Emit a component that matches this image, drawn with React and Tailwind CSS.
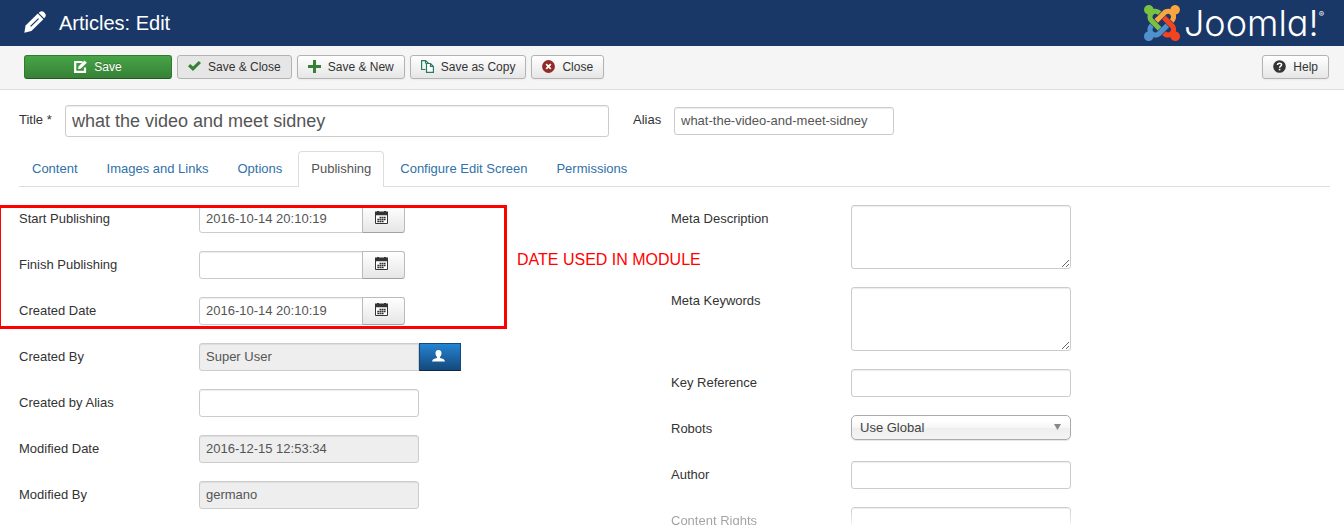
import React from "react";

const btnBase =
  "flex h-6 items-center justify-center gap-[7px] rounded-[3px] border px-[10px] text-[12px] leading-[18px] [&>svg]:mb-[2px]";
const btn = `${btnBase} border-[#b3b3b3] bg-linear-to-b from-white to-[#e6e6e6] text-[#333] shadow-[0_1px_2px_rgba(0,0,0,0.05)]`;
const field =
  "h-7 border border-[#ccc] px-[6px] pb-[2px] text-[13px] leading-[18px] text-[#555] shadow-[inset_0_1px_1px_rgba(0,0,0,0.075)]";
const area =
  "h-16 w-[220px] rounded-[3px] border border-[#ccc] shadow-[inset_0_1px_1px_rgba(0,0,0,0.075)]";
const labelText = "w-[180px] shrink-0 pt-[5px] text-[13px] leading-[18px] text-[#333]";

function Pencil() {
  return (
    <svg viewBox="0 0 22 22" className="size-[22px] shrink-0" fill="#fff" aria-hidden="true">
      <path d="M0.3 21.7 1.6 14.4 13.8 2.6 19.4 8.2 7.4 20Z" />
      <path d="M14.7 1.9 16 .8C17.3-.1 18.8.1 19.8 1.1L20.9 2.2C21.9 3.2 22.1 4.7 21.2 6L20.1 7.3Z" />
      <path d="M6.600 15.400 14.600 7.600" stroke="#1a3867" strokeWidth="1.3" />
      <path d="M14.2 2.2 19.8 7.8" stroke="#1a3867" strokeWidth="0.6" />
    </svg>
  );
}
function EditIcon() {
  return (
    <svg viewBox="0 0 13 13" className="size-[13px]" fill="none" aria-hidden="true">
      <path d="M8.5 2H1.2V11.8H11V7.5" stroke="#fff" strokeWidth="2.2" />
      <path d="M4 9.2 4.7 6.2 10.5.4 12.8 2.7 7 8.5Z" fill="#fff" />
    </svg>
  );
}
function CheckIcon() {
  return (
    <svg viewBox="0 0 13 12" className="h-3 w-[13px]" aria-hidden="true">
      <path d="M0 6.2 2.2 4 5 6.600 10.800 1 13 3 5 11Z" fill="#378137" />
    </svg>
  );
}
function PlusIcon() {
  return (
    <svg viewBox="0 0 13 13" className="size-[13px]" aria-hidden="true">
      <path d="M5 0H8V5H13V8H8V13H5V8H0V5H5Z" fill="#378137" />
    </svg>
  );
}
function CopyIcon() {
  return (
    <svg viewBox="0 0 13 13" className="size-[13px]" fill="none" stroke="#2b7a62" strokeWidth="1.2" aria-hidden="true">
      <path d="M4.5 9.5H.6V.6H4.5L7.5 3.2" />
      <path d="M4.5.5V3.5" />
      <path d="M5.500 3.500H9.500L12.400 6.500V12.400H5.500Z" fill="#fff" />
      <path d="M9.500 3.500V6.500H12.500" />
    </svg>
  );
}
function CancelIcon() {
  return (
    <svg viewBox="0 0 13 13" className="size-[13px]" aria-hidden="true">
      <circle cx="6.5" cy="6.5" r="6.4" fill="#942a25" />
      <path d="M4.2 4.2 8.8 8.8M8.8 4.2 4.2 8.8" stroke="#fff" strokeWidth="1.7" />
    </svg>
  );
}
function HelpIcon() {
  return (
    <svg viewBox="0 0 13 13" className="size-[13px]" aria-hidden="true">
      <circle cx="6.5" cy="6.5" r="6.3" fill="#333" />
      <path d="M4.5 5.1C4.5 2.5 8.6 2.6 8.6 4.8 8.6 6.3 6.6 6.1 6.6 7.8" fill="none" stroke="#fff" strokeWidth="1.5" />
      <path d="M5.8 8.8H7.4V10.3H5.8Z" fill="#fff" />
    </svg>
  );
}
function CalendarIcon() {
  return (
    <svg viewBox="0 0 13 13" className="size-[13px]" aria-hidden="true">
      <path d="M.5 3.5H12.5V12.5H.5Z" fill="#fff" stroke="#333" />
      <path d="M0 .5H2V0H4V.5H9V0H11V.5H13V4.3H0Z" fill="#333" />
      <path d="M4.5 6.4H11M2.3 8.5H11M2.3 10.6H9" stroke="#333" strokeWidth="1.5" strokeDasharray="1.7 .4" />
    </svg>
  );
}
function UserIcon() {
  return (
    <svg viewBox="0 0 13 12" className="h-3 w-[13px]" fill="#fff" aria-hidden="true">
      <path d="M6.5 0C8.6 0 9.6 1.3 9.5 3.3 9.4 5 8.8 6.2 8 6.9V8C10.5 8.4 12.6 9.4 13 11.5H0C.4 9.4 2.5 8.4 5 8V6.9C4.2 6.2 3.6 5 3.5 3.3 3.4 1.3 4.4 0 6.5 0Z" />
    </svg>
  );
}
function JoomlaMark() {
  return (
    <svg viewBox="0 32 448 448" className="size-9" aria-hidden="true">
      <path fill="#7ac143" d="M.6 92.1C.6 58.8 27.4 32 60.4 32c30 0 54.5 21.9 59.2 50.2 32.6-7.6 67.1.6 96.5 30l-44.3 44.3c-20.5-20.5-42.6-16.3-55.4-3.5-14.3 14.3-14.3 37.9 0 52.2l99.5 99.5-44 44.3c-87.7-87.2-49.7-49.7-99.8-99.7-26.8-26.5-35-64.8-24.8-98.9C20.4 144.6.6 120.7.6 92.1z" />
      <path fill="#f9a541" d="M130.1 208.5l44.3 44.3c10-10 89.7-89.7 99.7-99.8 14.3-14.3 37.6-14.3 51.9 0 12.8 12.8 17 35-3.5 55.4l44 44.3c31.2-31.2 38.5-67.6 28.9-101.2 29.2-4.1 51.9-29.2 51.9-59.5 0-33.2-26.8-60.1-59.8-60.1-30.3 0-55.4 22.5-59.5 51.6-33.8-9.9-71.7-1.5-98.3 25.1-18.3 19.1-71.1 71.5-99.6 99.9z" />
      <path fill="#f44321" d="M396.4 360.7c8.2-32.7-.9-68.5-26.3-93.9-11.8-12.2 5 4.7-99.5-99.7l-44.3 44.3 99.7 99.7c14.3 14.3 14.3 37.6 0 51.9-12.8 12.8-35 17-55.4-3.5l-44 44.3c27.6 30.2 68 38.8 102.7 28 5.5 27.4 29.7 48.1 58.9 48.1 33 0 59.8-26.8 59.8-60.1 0-30.2-22.5-55-51.6-59.1z" />
      <path fill="#5091cd" d="M312.1 307.6l-44-44.3c-87 86.4-50.4 50.4-99.7 99.8-14.3 14.3-37.6 14.3-51.9 0-13.1-13.4-16.9-35.3 3.2-55.4l-44-44.3c-30.2 30.2-38 65.2-29.5 98.3-26.7 6-46.2 29.9-46.2 58.2C0 453.2 26.8 480 59.8 480c28.6 0 52.5-19.8 58.6-46.7 32.7 8.2 68.5-.6 94.2-26 32.1-32 12.2-12.4 99.5-99.7z" />
    </svg>
  );
}

function Row({ id, label, children }) {
  return (
    <div className="flex items-start">
      <label htmlFor={id} className={labelText}>{label}</label>
      {children}
    </div>
  );
}
function TextRow({ id, label, value = "", readOnly = false }) {
  return (
    <Row id={id} label={label}>
      <input id={id} defaultValue={value} readOnly={readOnly} className={`${field} w-[220px] rounded-[3px] ${readOnly ? "bg-[#eee]" : "bg-white"}`} />
    </Row>
  );
}
function DateRow({ id, label, value = "" }) {
  return (
    <Row id={id} label={label}>
      <input id={id} defaultValue={value} className={`${field} w-[164px] rounded-l-[3px] bg-white`} />
      <button type="button" aria-label={`Pick ${label}`} className="-ml-px flex h-7 w-[43px] items-start justify-center rounded-r-[3px] border border-[#bbb] border-b-[#a2a2a2] bg-linear-to-b from-white to-[#e6e6e6] pt-[5px] pr-1">
        <CalendarIcon />
      </button>
    </Row>
  );
}

const tabs = ["Content", "Images and Links", "Options", "Publishing", "Configure Edit Screen", "Permissions"];

export default function App() {
  return (
    <div className="relative h-screen overflow-hidden bg-white font-['Liberation_Sans',Arial,sans-serif] text-[13px] leading-[18px] text-[#333]">
      <header className="flex h-[46px] items-center bg-[#1a3867] pr-5 pl-6">
        <div className="flex flex-1 items-center gap-[13px]">
          <span className="-mt-[2px]"><Pencil /></span>
          <h1 className="text-[20px] leading-6 text-white">Articles: Edit</h1>
        </div>
        <div className="flex items-center gap-1 text-white">
          <JoomlaMark />
          <span className="flex items-start font-['Inter',sans-serif] text-[36px] leading-9 font-light [font-feature-settings:'cv11']">
            Joomla!<span className="mt-1 text-[8px] leading-[10px] font-normal">®</span>
          </span>
        </div>
      </header>

      <div className="flex items-start justify-between border-b border-[#ddd] bg-[#f5f5f5] pt-[9px] pr-[15px] pb-[10px] pl-6">
        <div className="flex gap-[5px]">
          <button type="button" className={`${btnBase} w-[148px] border-[#2f7a2f] border-b-[#1f5a1f] bg-linear-to-b from-[#46a546] to-[#378137] text-white text-shadow-[0_-1px_0_rgba(0,0,0,0.25)]`}><EditIcon />Save</button>
          <button type="button" className={`${btnBase} border-[#b3b3b3] bg-[#e6e6e6] text-[#333]`}><CheckIcon />Save &amp; Close</button>
          <button type="button" className={btn}><PlusIcon />Save &amp; New</button>
          <button type="button" className={btn}><CopyIcon />Save as Copy</button>
          <button type="button" className={btn}><CancelIcon />Close</button>
        </div>
        <button type="button" className={btn}><HelpIcon />Help</button>
      </div>

      <main className="pt-[15px] pr-[14px] pl-[19px]">
        <div className="flex items-center">
          <label htmlFor="title" className="w-[46px] shrink-0 pb-[2px]">Title *</label>
          <input id="title" defaultValue="what the video and meet sidney" className="h-8 w-[544px] rounded-[3px] border border-[#ccc] px-[6px] text-[18px] leading-6 text-[#555] shadow-[inset_0_1px_1px_rgba(0,0,0,0.075)]" />
          <label htmlFor="alias" className="ml-6 w-[41px] shrink-0 pb-[2px]">Alias</label>
          <input id="alias" defaultValue="what-the-video-and-meet-sidney" className={`${field} w-[220px] rounded-[3px]`} />
        </div>

        <nav className="mt-[14px] flex gap-[3px] border-b border-[#ddd]">
          {tabs.map((t) => (
            <a
              key={t}
              href="#"
              className={
                t === "Publishing"
                  ? "-mb-px rounded-t-[4px] border border-b-0 border-[#ddd] bg-white px-3 pt-2 pb-[9px] text-[#555]"
                  : "border border-b-0 border-transparent px-3 py-2 text-[#3071a9]"
              }
            >
              {t}
            </a>
          ))}
        </nav>

        <form className="mt-[18px] grid grid-cols-2 pr-[7px]">
          <div className="flex flex-col gap-[18px]">
            <DateRow id="publish_up" label="Start Publishing" value="2016-10-14 20:10:19" />
            <DateRow id="publish_down" label="Finish Publishing" />
            <DateRow id="created" label="Created Date" value="2016-10-14 20:10:19" />
            <Row id="created_by" label="Created By">
              <input id="created_by" readOnly defaultValue="Super User" className={`${field} w-[220px] rounded-l-[3px] bg-[#eee]`} />
              <button type="button" aria-label="Select User" className="flex h-7 w-[42px] items-start justify-center border border-[#15497c] border-b-[#0b2a49] bg-linear-to-b from-[#2384d3] to-[#15497c] pt-[6px] pr-1"><UserIcon /></button>
            </Row>
            <TextRow id="created_alias" label="Created by Alias" />
            <TextRow id="modified" label="Modified Date" value="2016-12-15 12:53:34" readOnly />
            <TextRow id="modified_by" label="Modified By" value="germano" readOnly />
          </div>
          <div className="flex flex-col gap-[18px]">
            <Row id="metadesc" label="Meta Description">
              <textarea id="metadesc" className={area} />
            </Row>
            <Row id="metakey" label="Meta Keywords">
              <textarea id="metakey" className={area} />
            </Row>
            <TextRow id="xreference" label="Key Reference" />
            <Row id="robots" label="Robots">
              <span className="grid h-7 w-[220px] items-start">
                <select id="robots" className="col-start-1 row-start-1 h-[25px] appearance-none rounded-[5px] border border-[#aaa] bg-[linear-gradient(#fff_20%,#f6f6f6_50%,#eee_52%,#f4f4f4_100%)] px-2 text-[13px] leading-[18px] text-[#444] shadow-[0_1px_1px_rgba(0,0,0,0.1)]">
                  <option>Use Global</option>
                </select>
                <svg viewBox="0 0 7 6" className="pointer-events-none col-start-1 row-start-1 mt-[9px] mr-[10px] h-[6px] w-[7px] justify-self-end" fill="#888" aria-hidden="true"><path d="M0 0H7L3.5 6Z" /></svg>
              </span>
            </Row>
            <TextRow id="author" label="Author" />
            <div className="flex items-start">
              <label htmlFor="rights" className={`${labelText} opacity-45`}>Content Rights</label>
              <input id="rights" className={`${field} w-[220px] rounded-[3px] bg-white [mask-image:linear-gradient(to_bottom,black_0,transparent_24px)]`} />
            </div>
          </div>
        </form>
      </main>

      <div className="pointer-events-none absolute top-[205px] -left-px h-[124px] w-[508px] border-[3px] border-l-2 border-[#f00]" />
      <p className="absolute top-[250px] left-[517px] text-[16px] leading-5 text-[#f00]">DATE USED IN MODULE</p>
    </div>
  );
}
